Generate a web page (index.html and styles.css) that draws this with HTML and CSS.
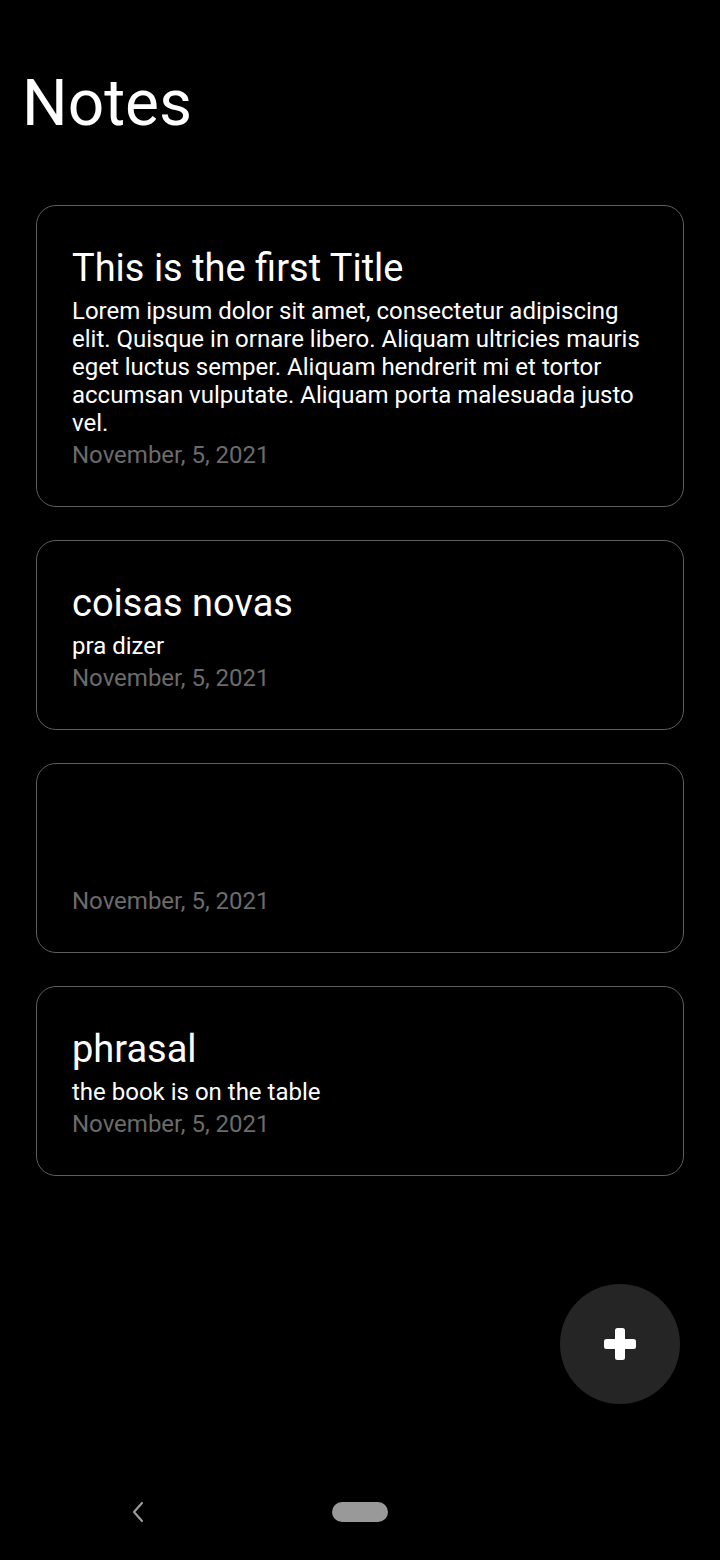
FILE: index.html
```html
<!DOCTYPE html>
<html lang="en">
<head>
<meta charset="utf-8">
<title>Notes</title>
<link rel="stylesheet" href="styles.css">
</head>
<body>
<div class="screen">
  <main class="main">
    <h1 class="page-title">Notes</h1>
    <ul class="note-list">
      <li class="note">
        <h2 class="note-title">This is the first Title</h2>
        <p class="note-body">Lorem ipsum dolor sit amet, consectetur adipiscing elit. Quisque in ornare libero. Aliquam ultricies mauris eget luctus semper. Aliquam hendrerit mi et tortor accumsan vulputate. Aliquam porta malesuada justo vel.</p>
        <p class="note-date">November, 5, 2021</p>
      </li>
      <li class="note">
        <h2 class="note-title">coisas novas</h2>
        <p class="note-body">pra dizer</p>
        <p class="note-date">November, 5, 2021</p>
      </li>
      <li class="note">
        <h2 class="note-title"></h2>
        <p class="note-body"></p>
        <p class="note-date">November, 5, 2021</p>
      </li>
      <li class="note">
        <h2 class="note-title">phrasal</h2>
        <p class="note-body">the book is on the table</p>
        <p class="note-date">November, 5, 2021</p>
      </li>
    </ul>
    <button class="fab" aria-label="Add note">
      <svg width="32" height="32" viewBox="0 0 32 32">
        <rect x="11" y="0" width="10" height="32" rx="2.5" fill="#fff"/>
        <rect x="0" y="11" width="32" height="10" rx="2.5" fill="#fff"/>
      </svg>
    </button>
  </main>
  <nav class="nav-bar">
    <div class="nav-back">
      <svg width="14" height="22" viewBox="0 0 14 22">
        <path d="M11 2 L3 11 L11 20" fill="none" stroke="#999" stroke-width="2.2" stroke-linecap="round" stroke-linejoin="round"/>
      </svg>
    </div>
    <div class="nav-home"></div>
    <div class="nav-spacer"></div>
  </nav>
</div>
</body>
</html>
```

FILE: styles.css
```css
* { box-sizing: border-box; }
html, body {
  margin: 0;
  padding: 0;
  background: #000;
}
body {
  font-family: Roboto, "Liberation Sans", sans-serif;
  color: #fff;
}
.screen {
  width: 720px;
  height: 1560px;
  display: flex;
  flex-direction: column;
  background: #000;
}
.main {
  position: relative;
  flex: 1;
}
.page-title {
  margin: 0;
  padding: 66px 0 0 22px;
  font-size: 64px;
  font-weight: 400;
  line-height: 75px;
}
.note-list {
  list-style: none;
  margin: 64px 36px 0;
  padding: 0;
  display: flex;
  flex-direction: column;
  gap: 33px;
}
.note {
  border: 1px solid #5e5e5e;
  border-radius: 20px;
  padding: 40px 35px 37px;
}
.note-title {
  margin: 0;
  font-size: 38px;
  font-weight: 400;
  line-height: 44px;
  min-height: 44px;
}
.note-body {
  margin: 7px 0 0;
  font-size: 24px;
  line-height: 28px;
  min-height: 28px;
}
.note-date {
  margin: 4px 0 0;
  font-size: 24px;
  line-height: 28px;
  color: #6b6b6b;
}
.fab {
  position: absolute;
  left: 560px;
  top: 1284px;
  width: 120px;
  height: 120px;
  border: none;
  border-radius: 50%;
  background: #252525;
  display: flex;
  align-items: center;
  justify-content: center;
  padding: 0;
}
.fab svg { display: block; }
.nav-bar {
  height: 96px;
  display: flex;
  align-items: center;
  justify-content: space-between;
  padding: 0 120px;
}
.nav-back {
  width: 36px;
  display: flex;
  justify-content: center;
}
.nav-back svg { display: block; }
.nav-home {
  width: 56px;
  height: 20px;
  border-radius: 10px;
  background: #999;
}
.nav-spacer { width: 36px; }
```
